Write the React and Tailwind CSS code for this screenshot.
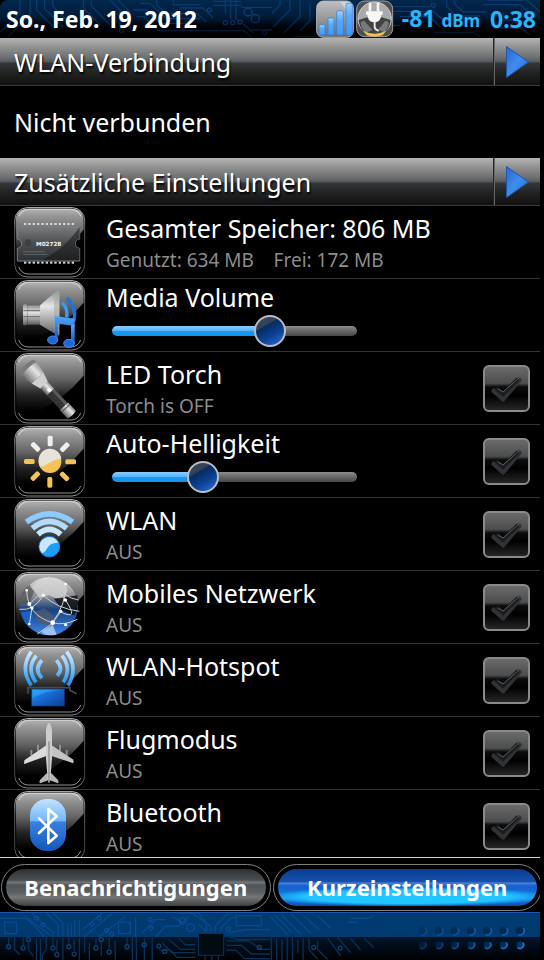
import { useState } from "react";

const memoryPins = [30, 43, 56, 69, 82, 95, 108, 121, 134, 147, 160, 173];
const sunRays = [0, 45, 90, 135, 180, 225, 270, 315];
const footerDots = [460, 510, 557, 607, 656, 705, 755];

function SharedGradients() {
  return (
    <svg className="absolute w-0 h-0" aria-hidden="true">
      <defs>
        <linearGradient id="gloss" x1="0" y1="0" x2="0" y2="1">
          <stop offset="0" stopColor="#b4b4b4" />
          <stop offset="0.12" stopColor="#979797" />
          <stop offset="0.42" stopColor="#626262" />
          <stop offset="0.68" stopColor="#222222" />
          <stop offset="0.95" stopColor="#000000" />
        </linearGradient>
        <linearGradient id="rim" x1="0" y1="0" x2="0" y2="1">
          <stop offset="0" stopColor="#c6c6c6" />
          <stop offset="0.3" stopColor="#5f5f5f" />
          <stop offset="0.8" stopColor="#444444" />
          <stop offset="1" stopColor="#8a8a8a" />
        </linearGradient>
        <linearGradient id="metal" x1="0" y1="0" x2="0" y2="1">
          <stop offset="0" stopColor="#8c8c8c" />
          <stop offset="0.35" stopColor="#e6e6e6" />
          <stop offset="0.7" stopColor="#a0a0a0" />
          <stop offset="1" stopColor="#5e5e5e" />
        </linearGradient>
        <linearGradient id="chip" x1="0" y1="0" x2="0" y2="1">
          <stop offset="0" stopColor="#7c7e80" />
          <stop offset="0.5" stopColor="#4b4e51" />
          <stop offset="1" stopColor="#2c3034" />
        </linearGradient>
        <linearGradient id="note" x1="0" y1="0" x2="0" y2="1">
          <stop offset="0" stopColor="#4fa8fb" />
          <stop offset="1" stopColor="#1556c8" />
        </linearGradient>
        <linearGradient id="pill" x1="0" y1="0" x2="0" y2="1">
          <stop offset="0" stopColor="#c4e4ff" />
          <stop offset="0.42" stopColor="#6fb6fb" />
          <stop offset="0.44" stopColor="#3a80e0" />
          <stop offset="1" stopColor="#1359bd" />
        </linearGradient>
        <linearGradient id="waves" gradientUnits="userSpaceOnUse" x1="0" y1="20" x2="0" y2="122">
          <stop offset="0" stopColor="#d0eaff" />
          <stop offset="0.4" stopColor="#8fcbff" />
          <stop offset="1" stopColor="#168ff2" />
        </linearGradient>
        <linearGradient id="globe" x1="0" y1="0" x2="0" y2="1">
          <stop offset="0" stopColor="#e0e0e0" />
          <stop offset="0.35" stopColor="#85888e" />
          <stop offset="0.55" stopColor="#16427f" />
          <stop offset="1" stopColor="#3f86ea" />
        </linearGradient>
        <linearGradient id="screen" x1="0" y1="0" x2="1" y2="1">
          <stop offset="0" stopColor="#1b9cf6" />
          <stop offset="0.5" stopColor="#1563c9" />
          <stop offset="1" stopColor="#0a3f96" />
        </linearGradient>
        <linearGradient id="arrow" x1="0" y1="0" x2="1" y2="1">
          <stop offset="0" stopColor="#2a66cc" />
          <stop offset="0.5" stopColor="#3f8df0" />
          <stop offset="1" stopColor="#2468d4" />
        </linearGradient>
        <linearGradient id="bar" x1="0" y1="0" x2="0" y2="1">
          <stop offset="0" stopColor="#9dd0ff" />
          <stop offset="0.4" stopColor="#55a9fb" />
          <stop offset="1" stopColor="#3f9af8" />
        </linearGradient>
        <linearGradient id="badge" x1="0" y1="0" x2="0" y2="1">
          <stop offset="0" stopColor="#c0c0c0" />
          <stop offset="1" stopColor="#6c6c6c" />
        </linearGradient>
      </defs>
    </svg>
  );
}

function Tile({ children }) {
  return (
    <svg viewBox="0 0 216 213" className="w-[72px] h-[71px] shrink-0" aria-hidden="true">
      <rect x="2" y="2" width="210" height="208" rx="38" fill="#000" stroke="url(#rim)" strokeWidth="3" />
      <path d="M5 42Q5 5 42 5H172Q209 5 209 42V68Q150 138 70 176Q40 190 8 176Z" fill="url(#gloss)" />
      <path d="M14 28Q24 7 44 7H170Q192 7 201 28" fill="none" stroke="#dcdcdc" strokeWidth="4" opacity="0.7" />
      <path d="M14 180Q22 200 42 201H172Q192 200 200 180" fill="none" stroke="#b4b4b4" strokeWidth="3" opacity="0.8" />
      {children}
    </svg>
  );
}

function MemoryIcon() {
  return (
    <Tile>
      <path d="M10 57H197V96Q184 98 184 110Q184 122 197 124V162H10V124Q23 122 23 110Q23 98 10 96Z" fill="url(#chip)" stroke="#7b7f82" strokeWidth="3" />
      <path d="M197 60V96Q184 98 184 110Q184 122 197 124V160H82Q150 128 197 60Z" fill="#111" opacity="0.5" />
      {memoryPins.map((x) => (
        <g key={x} fill="#d8d8d8">
          <rect x={x} y="48" width="7" height="6" />
          <rect x={x} y="164" width="7" height="6" />
        </g>
      ))}
      <circle cx="42" cy="107" r="10" fill="#3c4043" />
      <path d="M28 134H92M28 142H100" stroke="#5e6469" strokeWidth="3" />
      <text x="66" y="116" fontSize="17" fontWeight="700" fill="#f4f4f4" className="font-['DejaVu_Sans']">M02728</text>
    </Tile>
  );
}

function VolumeIcon() {
  return (
    <Tile>
      <rect x="27" y="72" width="12" height="64" rx="5" fill="url(#metal)" />
      <rect x="40" y="76" width="38" height="58" fill="url(#metal)" />
      <path d="M28 92H78M28 110H78" stroke="#777" strokeWidth="4" />
      <path d="M78 76L128 32Q136 28 136 40V158Q136 170 128 164L78 134Z" fill="url(#metal)" />
      <path d="M120 40L136 30V168L120 154Z" fill="#a8a8a8" opacity="0.6" />
      <path d="M144 68Q162 84 158 112" fill="none" stroke="#3f9af6" strokeWidth="10" />
      <path d="M158 54Q190 84 179 124" fill="none" stroke="#1d74dc" strokeWidth="10" />
      <path d="M122 108L182 116V138L132 131V176H122Z" fill="url(#note)" />
      <path d="M171 134H182V190H171Z" fill="url(#note)" />
      <ellipse cx="116" cy="180" rx="15" ry="12" fill="#1f66d8" stroke="#3f8fee" strokeWidth="3" />
      <ellipse cx="165" cy="190" rx="16" ry="12" fill="#1f66d8" stroke="#3f8fee" strokeWidth="3" />
    </Tile>
  );
}

function TorchIcon() {
  return (
    <Tile>
      <g transform="translate(38 40) rotate(47)">
        <path d="M-2 -28Q-10 0 -2 28L12 32V-32Z" fill="#7a7a7a" />
        <path d="M10 -33L48 -24V24L10 33Q4 0 10 -33Z" fill="url(#metal)" />
        <path d="M48 -24L78 -15V15L48 24Z" fill="#d0d0d0" />
        <path d="M76 -15H106V15H76Z" fill="url(#metal)" />
        <circle cx="98" cy="-1" r="6" fill="#fff" />
        <path d="M106 -15H166V15H106Z" fill="#343434" />
        <path d="M106 -14H166V-5H106Z" fill="#5a5a5a" />
        <path d="M164 -17H198Q204 0 198 17H164Z" fill="url(#metal)" />
        <path d="M172 -16V16" stroke="#555" strokeWidth="3" />
      </g>
    </Tile>
  );
}

function SunIcon() {
  return (
    <Tile>
      <circle cx="108" cy="107" r="34" fill="#f3c357" />
      <path d="M74 107A34 34 0 0 1 142 98Q120 100 104 112Q90 122 78 122Q74 114 74 107Z" fill="#e8e3d9" />
      {sunRays.map((angle) => (
        <rect
          key={angle}
          x="101"
          y="29"
          width="15"
          height="32"
          rx="5"
          fill={angle < 60 || angle === 315 ? "#efefef" : "#f3c357"}
          transform={`rotate(${angle} 108 107)`}
        />
      ))}
    </Tile>
  );
}

function WifiIcon() {
  return (
    <Tile>
      <g fill="none" strokeWidth="17">
        <path d="M37 69Q106 20 176 69" stroke="#8ccaff" />
        <path d="M55 88Q106 46 158 88" stroke="#b0dcff" />
        <path d="M72 106Q106 76 140 106" stroke="#c8e7ff" />
      </g>
      <circle cx="106" cy="143" r="31" fill="#1d9ff5" stroke="#1878e6" strokeWidth="3" />
      <path d="M76 143A30 30 0 0 1 133 131Q108 130 98 150Q92 162 84 162Q76 154 76 143Z" fill="#c9e7ff" />
    </Tile>
  );
}

function GlobeIcon() {
  return (
    <Tile>
      <circle cx="105" cy="103" r="87" fill="url(#globe)" />
      <path d="M18 96Q18 60 46 38L60 60L44 96Z" fill="#505050" opacity="0.7" />
      <path d="M54 44Q80 14 120 20Q162 30 160 60L140 84L104 70L76 78Z" fill="#d4d4d4" opacity="0.75" />
      <path d="M120 80L190 70Q196 110 180 130L146 116Z" fill="#0b0b0b" opacity="0.8" />
      <path d="M60 120L92 108L128 140L110 164L70 150Z" fill="#555b66" opacity="0.7" />
      <path d="M20 122L50 116L62 150L34 152Z" fill="#1c5fc6" />
      <path d="M84 176L116 158L128 188Q100 194 84 182Z" fill="#b8d2f2" opacity="0.8" />
      <g fill="none" stroke="#cfcfcf" strokeWidth="3">
        <path d="M16 112Q60 118 88 70Q110 34 104 14" />
        <path d="M38 56Q40 130 116 152Q150 162 190 142" />
        <path d="M46 98Q110 20 154 84T140 120L116 152" />
        <path d="M88 70Q130 110 196 118" />
        <path d="M155 36Q158 96 112 156L70 186" />
        <path d="M104 14Q150 80 194 84" />
        <path d="M54 108L46 156" />
      </g>
      <g fill="#fff">
        <circle cx="38" cy="55" r="4" />
        <circle cx="88" cy="70" r="5" />
        <circle cx="155" cy="36" r="4" />
        <circle cx="46" cy="96" r="6" />
        <circle cx="54" cy="108" r="5" />
        <circle cx="154" cy="84" r="5" />
        <circle cx="140" cy="118" r="5" />
        <circle cx="116" cy="152" r="7" />
        <circle cx="155" cy="158" r="5" />
        <circle cx="46" cy="156" r="4" />
      </g>
    </Tile>
  );
}

function HotspotIcon() {
  return (
    <Tile>
      <g fill="none" stroke="url(#waves)" strokeWidth="11">
        <path d="M52 20Q16 70 52 122" />
        <path d="M67 32Q36 70 66 112" />
        <path d="M84 46Q58 72 84 100" />
        <path d="M158 20Q194 70 162 122" />
        <path d="M144 32Q174 70 148 112" />
        <path d="M127 46Q151 72 129 92" />
      </g>
      <path d="M42 146V128H168V138M168 136L188 146" fill="none" stroke="#47494d" strokeWidth="5" />
      <rect x="53" y="132" width="98" height="51" fill="url(#screen)" stroke="#0b3a86" strokeWidth="2" />
      <path d="M56 158Q100 136 148 134H56Z" fill="#35adff" opacity="0.5" />
    </Tile>
  );
}

function PlaneIcon() {
  return (
    <Tile>
      <path d="M52 96V112M72 80V98M138 80V98M158 96V112" stroke="#8f8f8f" strokeWidth="6" />
      <path d="M97 82L32 126Q28 134 31 138L97 114Z" fill="#dcdcdc" />
      <path d="M113 82L176 124Q182 130 178 136L113 114Z" fill="#c4c4c4" />
      <path d="M98 166L78 186Q74 194 78 196L105 186L132 196Q136 194 132 186L112 166Z" fill="#b5b5b5" />
      <path d="M105 14Q97 20 96 40V120L101 184L105 196L109 184L114 120V40Q113 20 105 14Z" fill="#cdcdcd" />
      <path d="M105 70V194" stroke="#8d8d8d" strokeWidth="4" />
    </Tile>
  );
}

function BluetoothIcon() {
  return (
    <Tile>
      <rect x="48" y="24" width="108" height="156" rx="50" fill="url(#pill)" />
      <path d="M75 82L128 134L103 156V54L128 76L75 126" fill="none" stroke="#fff" strokeWidth="8" strokeLinejoin="round" strokeLinecap="round" />
    </Tile>
  );
}

function StatusCircuit() {
  return (
    <svg viewBox="0 0 1632 114" preserveAspectRatio="xMinYMin slice" className="absolute inset-0 w-full h-full" aria-hidden="true">
      <g fill="none" stroke="#083a70" strokeWidth="4">
        <path d="M0 96L60 40V0M24 110L90 44V0M110 0V30L170 90M134 0V26L190 82M158 0V18L210 70M250 0V24L300 74M274 0V18L330 74M330 0L360 30V80M354 0L390 36V90" />
        <path d="M400 30H440L480 70H560M410 50H432L476 92H730L756 112M420 10H450L500 56H600M470 0V16L500 40H590L620 66M520 0V14H600M540 24H610L640 54" />
        <path d="M676 0V40M692 0V58M708 0V60M640 16H724M640 4H724M724 22H816M748 90H816M730 72L760 100" />
        <path d="M816 40L840 16V0M820 80L870 30V0M850 100L900 50V0M900 92L930 62V8M880 110H960L990 84" />
        <path d="M1080 104L1110 74V40L1150 0M1104 110L1140 76H1200M1170 20H1290M1180 34H1300L1330 60H1400M1200 50H1290L1320 80M1340 0V20L1370 48H1440M1364 0V12L1390 36H1460M1450 14H1560L1600 50M1460 0H1580L1620 36M1480 84H1560L1590 104M1300 98H1420L1440 110M1500 60H1540L1580 96" />
      </g>
      <g fill="none" stroke="#0a3f7a" strokeWidth="4">
        <circle cx="744" cy="36" r="12" />
        <circle cx="766" cy="56" r="12" />
        <circle cx="676" cy="68" r="6" />
        <circle cx="698" cy="68" r="6" />
        <circle cx="720" cy="66" r="6" />
        <circle cx="628" cy="30" r="6" />
        <circle cx="794" cy="98" r="6" />
        <circle cx="364" cy="92" r="6" />
        <circle cx="1300" cy="16" r="6" />
      </g>
    </svg>
  );
}

function FooterCircuit() {
  return (
    <svg viewBox="0 0 1632 144" preserveAspectRatio="xMinYMin slice" className="absolute inset-0 w-full h-full" aria-hidden="true">
      <g fill="none" stroke="#08498f" strokeWidth="4">
        <path d="M0 16H80L130 66V72M70 6L150 66M96 0L160 60V72M140 0L176 36V72M160 0L190 30V72M205 30V72M215 30V72M226 24V72M240 20V72M340 0L254 72M310 0L250 50M380 10L300 72M410 14V72M430 60L470 20H500" />
        <path d="M470 72L500 40H540L570 10M540 0H600L624 30V56M580 0L636 40V56M650 56V40L690 0M668 56V44L700 14H712M690 60L740 50H816M520 10L552 30M600 34L624 56" />
        <rect x="14" y="28" width="36" height="34" />
        <rect x="358" y="28" width="36" height="34" />
        <rect x="714" y="8" width="76" height="30" />
        <path d="M816 10L870 66M830 6L884 60M850 4L910 66M880 4L940 62M920 10L964 50M960 8L1000 46M1060 16H1110L1130 8M1050 28H1080" />
      </g>
      <g fill="none" stroke="#0d55a5" strokeWidth="3">
        <circle cx="110" cy="16" r="6" />
        <circle cx="130" cy="36" r="6" />
        <circle cx="278" cy="34" r="6" />
        <circle cx="300" cy="16" r="6" />
        <circle cx="322" cy="52" r="6" />
        <circle cx="338" cy="64" r="6" />
        <circle cx="454" cy="20" r="6" />
        <circle cx="456" cy="46" r="6" />
        <circle cx="552" cy="24" r="10" />
        <circle cx="576" cy="44" r="12" />
        <circle cx="690" cy="48" r="6" />
      </g>
      <g fill="none" stroke="#043258" strokeWidth="4">
        <path d="M26 72V96M44 72V110L60 126M70 72V100M86 84V110L100 130M110 76V144M122 76V144M140 72V110L128 126V144M160 72V100M172 80V120M190 76V144M208 72V96M224 80V116M240 76V144M256 72V120M270 90V144M290 76V100M306 84V130M330 72V110M348 84V144M384 72V96M400 72V144M412 72V144M436 76V144M460 72V144" />
        <path d="M490 90L520 120H590M510 80L546 110H590M540 76L560 96H590M480 112H516L534 134H590M684 70L720 80H816M684 84H750L790 110H816M684 98H730L760 124H816M684 112H712L740 138H816M640 130V144M660 130V144M620 130V144" />
        <path d="M820 72V144M836 76V144M852 80V144M868 72V144M884 72V144M900 80V120M916 76V144M934 72V110L960 140M960 84V110L990 140M990 76L1030 130M1020 74L1060 120M1060 78L1090 112M1100 76L1130 104" />
      </g>
      <rect x="600" y="62" width="76" height="66" fill="#020a12" stroke="#053461" strokeWidth="3" />
      <g fill="none" stroke="#0b4176" strokeWidth="4">
        <circle cx="26" cy="102" r="6" />
        <circle cx="70" cy="106" r="6" />
        <circle cx="86" cy="80" r="6" />
        <circle cx="160" cy="106" r="6" />
        <circle cx="172" cy="126" r="6" />
        <circle cx="208" cy="102" r="6" />
        <circle cx="224" cy="124" r="6" />
        <circle cx="290" cy="106" r="6" />
        <circle cx="306" cy="80" r="6" />
        <circle cx="330" cy="118" r="6" />
        <circle cx="384" cy="102" r="6" />
        <circle cx="436" cy="96" r="6" />
        <circle cx="480" cy="100" r="6" />
        <circle cx="498" cy="116" r="6" />
        <circle cx="784" cy="104" r="6" />
        <circle cx="948" cy="104" r="6" />
        <circle cx="1028" cy="106" r="6" />
      </g>
      {footerDots.map((x, i) => (
        <g key={x} transform={`translate(${816 + x} 0)`} opacity={0.4 + i * 0.1}>
          <circle cx="0" cy="54" r="12" fill="#01294f" />
          <path d="M10 46A12 12 0 0 1 -4 65" fill="none" stroke="#1763b8" strokeWidth="5" />
          <circle cx="0" cy="96" r="10" fill="#063160" />
          <path d="M9 89A11 11 0 0 1 -7 104" fill="none" stroke="#1c74d0" strokeWidth="5" />
        </g>
      ))}
    </svg>
  );
}

function SignalIcon() {
  return (
    <svg viewBox="0 0 114 114" className="w-[38px] h-[38px]" role="img" aria-label="Signal">
      <rect x="2" y="3" width="110" height="109" rx="20" fill="url(#badge)" stroke="#b5b5b5" strokeWidth="3" />
      <path d="M72 5H92Q110 5 110 23V70L90 30Z" fill="#d9ecff" opacity="0.5" />
      <g fill="url(#bar)" stroke="#2a7be0" strokeWidth="2">
        <rect x="9" y="74" width="18" height="31" rx="4" />
        <rect x="36" y="54" width="18" height="51" rx="4" />
        <rect x="62" y="32" width="20" height="73" rx="4" />
        <rect x="90" y="10" width="19" height="95" rx="4" />
      </g>
    </svg>
  );
}

function PlugIcon() {
  return (
    <svg viewBox="0 0 114 114" className="w-[38px] h-[38px]" role="img" aria-label="Charging">
      <rect x="2" y="3" width="108" height="107" rx="24" fill="#4f4f4f" stroke="#a0a0a0" strokeWidth="3" />
      <circle cx="56" cy="56" r="50" fill="#aaaaaa" stroke="#cfcfcf" strokeWidth="3" />
      <path d="M8 60Q56 40 104 60Q100 104 56 104Q12 104 8 60Z" fill="#3f4142" />
      <path d="M24 62L50 90L30 98Q14 84 14 66Z" fill="#77797a" />
      <path d="M88 62L66 90L84 96Q98 84 98 66Z" fill="#77797a" />
      <path d="M22 92Q56 110 90 92L80 106Q56 114 32 106Z" fill="#f3bf4c" />
      <path d="M42 8V34M66 8V34" stroke="#f4f4f4" strokeWidth="8" />
      <path d="M30 34H80V44H76Q74 64 60 66H50Q36 64 34 44H30Z" fill="#f7f7f7" />
      <path d="M56 66V82Q58 90 68 92" fill="none" stroke="#e6e6e6" strokeWidth="6" />
    </svg>
  );
}

function StatusBar() {
  return (
    <header className="relative h-[38px] flex items-center justify-between overflow-hidden rounded-tl-lg bg-linear-to-b from-[#01284e] via-[#011a34] to-black pl-1.5 pr-1">
      <StatusCircuit />
      <div className="absolute inset-0 bg-linear-to-b from-transparent from-40% to-black/80" />
      <span className="relative text-[23px] leading-8 font-bold text-white">So., Feb. 19, 2012</span>
      <div className="relative flex items-center gap-0.5 font-bold text-[#27b6fb]">
        <SignalIcon />
        <PlugIcon />
        <span className="pl-1.5 text-[23px] leading-8">
          -81 <span className="text-[17px]">dBm</span>
        </span>
        <span className="pl-2 text-[23px] leading-8">0:38</span>
      </div>
    </header>
  );
}

function SectionHeader({ title }) {
  return (
    <div className="flex h-12 border-b border-[#3c3c3c] bg-[linear-gradient(#b4b4b4,#8a8a8a_24%,#6c6e70_42%,#54595d_51%,#34373a_53%,#232424_72%,#101010)]">
      <h2 className="flex-1 pl-3.5 pt-2 text-[25px] leading-8 text-white [text-shadow:1px_2px_2px_#000]">{title}</h2>
      <button type="button" aria-label={`${title} öffnen`} className="w-[47px] flex items-center pl-3 border-l border-[#242424] shadow-[inset_1px_0_0_#666]">
        <svg viewBox="0 0 23 32" className="w-[23px] h-8" aria-hidden="true">
          <path d="M0.5 0.5L22.5 16L0.5 31.5Z" fill="url(#arrow)" stroke="#2257a8" />
        </svg>
      </button>
    </div>
  );
}

function Slider({ label, value, max, onChange }) {
  const ratio = value / max;
  return (
    <input
      type="range"
      aria-label={label}
      min="0"
      max={max}
      value={value}
      onChange={(e) => onChange(Number(e.target.value))}
      style={{ "--fill": `calc(16px + ${ratio} * (100% - 32px))` }}
      className="block ml-1.5 mb-1 h-8 w-full max-w-[245px] appearance-none bg-transparent [&::-webkit-slider-runnable-track]:h-2.5 [&::-webkit-slider-runnable-track]:rounded-full [&::-webkit-slider-runnable-track]:[background:linear-gradient(#8accff,#5cb4fb_45%,#159bf3_55%,#1590e6)_0_0/var(--fill)_100%_no-repeat,linear-gradient(#8d8d8d,#6a6a6a_45%,#474747)] [&::-webkit-slider-thumb]:appearance-none [&::-webkit-slider-thumb]:-mt-[11px] [&::-webkit-slider-thumb]:size-8 [&::-webkit-slider-thumb]:rounded-full [&::-webkit-slider-thumb]:border-2 [&::-webkit-slider-thumb]:border-[#bdbdc1] [&::-webkit-slider-thumb]:bg-[linear-gradient(150deg,#3c4654_12%,#2f4259_30%,#072b62_34%,#0b4090_62%,#2f6fe0)]"
    />
  );
}

function CheckBox({ label }) {
  const [checked, setChecked] = useState(false);
  return (
    <label className="relative size-[47px] shrink-0">
      <input
        type="checkbox"
        aria-label={label}
        checked={checked}
        onChange={() => setChecked(!checked)}
        className="peer block size-full appearance-none rounded-md border-2 border-[#8a8a8a] bg-[linear-gradient(#6a6a6a,#4c4d4e_38%,#0c0c0c_46%,#000_66%,#262626)]"
      />
      <svg viewBox="0 0 47 47" className="absolute inset-0 size-full pointer-events-none text-[#303236] peer-checked:text-[#2f8df2]" fill="none" aria-hidden="true">
        <path d="M11 26L20 34L36 15" stroke="currentColor" strokeWidth="5" strokeLinecap="round" strokeLinejoin="round" />
        <path d="M13 23L20 29L35 14" stroke="#1b1c1e" strokeWidth="4" />
        <path d="M15 24L20 27L36 13" stroke="#595b5f" strokeWidth="1" />
      </svg>
    </label>
  );
}

function SettingRow({ icon, title, detail, slider, checkable }) {
  return (
    <li className="flex items-center gap-5 min-h-[73px] border-b border-[#333333] pl-3.5 pr-2.5">
      {icon}
      <div className="flex-1 min-w-0">
        <h3 className="text-[25px] leading-9 text-white">{title}</h3>
        {detail && <p className="text-[19px] leading-7 text-[#8c8c8c] whitespace-pre">{detail}</p>}
        {slider}
      </div>
      {checkable && <CheckBox label={title} />}
    </li>
  );
}

function TabButton({ active, onClick, children }) {
  return (
    <button
      type="button"
      aria-pressed={active}
      onClick={onClick}
      className="w-1/2 h-[47px] shrink-0 rounded-full border border-[#808080] bg-black p-1"
    >
      <span
        className={
          active
            ? "flex h-full items-center justify-center rounded-full bg-[radial-gradient(ellipse_56%_26%_at_50%_75%,#22c6ff_70%,transparent),linear-gradient(#0b3c90,#1550ac_34%,#4d80d8_38%,#1360cc_46%,#1480e8_80%,#0c4cb0)] text-[22px] font-bold text-white"
            : "flex h-full items-center justify-center rounded-full bg-[linear-gradient(#2e3032,#4c4f52_30%,#74777a_36%,#505358_44%,#5c5e62_62%,#747678_76%,#3c3e40)] text-[22px] font-bold text-white"
        }
      >
        {children}
      </span>
    </button>
  );
}

export default function App() {
  const [volume, setVolume] = useState(10);
  const [brightness, setBrightness] = useState(35);
  const [tab, setTab] = useState("settings");

  return (
    <div className="h-screen bg-black pr-1 font-['Noto_Sans',sans-serif]">
      <SharedGradients />
      <div className="flex h-full flex-col overflow-hidden">
        <StatusBar />
        <SectionHeader title="WLAN-Verbindung" />
        <p className="px-3.5 py-5 text-[25px] leading-8 text-white">Nicht verbunden</p>
        <SectionHeader title="Zusätzliche Einstellungen" />
        <ul className="flex-1 min-h-0 overflow-hidden">
          <SettingRow icon={<MemoryIcon />} title="Gesamter Speicher: 806 MB" detail="Genutzt: 634 MB    Frei: 172 MB" />
          <SettingRow
            icon={<VolumeIcon />}
            title="Media Volume"
            slider={<Slider label="Media Volume" value={volume} max={15} onChange={setVolume} />}
          />
          <SettingRow icon={<TorchIcon />} title="LED Torch" detail="Torch is OFF" checkable />
          <SettingRow
            icon={<SunIcon />}
            title="Auto-Helligkeit"
            slider={<Slider label="Helligkeit" value={brightness} max={100} onChange={setBrightness} />}
            checkable
          />
          <SettingRow icon={<WifiIcon />} title="WLAN" detail="AUS" checkable />
          <SettingRow icon={<GlobeIcon />} title="Mobiles Netzwerk" detail="AUS" checkable />
          <SettingRow icon={<HotspotIcon />} title="WLAN-Hotspot" detail="AUS" checkable />
          <SettingRow icon={<PlaneIcon />} title="Flugmodus" detail="AUS" checkable />
          <SettingRow icon={<BluetoothIcon />} title="Bluetooth" detail="AUS" checkable />
        </ul>
        <nav className="flex gap-0.5 overflow-hidden border-t border-[#d4d4d4] pl-px pt-1.5 pb-px">
          <TabButton active={tab === "notifications"} onClick={() => setTab("notifications")}>
            Benachrichtigungen
          </TabButton>
          <TabButton active={tab === "settings"} onClick={() => setTab("settings")}>
            Kurzeinstellungen
          </TabButton>
        </nav>
        <footer className="relative h-12 overflow-hidden border-t border-[#1d56ae] bg-[linear-gradient(#003a6e_50%,#001528_51%,#00070e_85%,#000)]">
          <FooterCircuit />
        </footer>
      </div>
    </div>
  );
}
